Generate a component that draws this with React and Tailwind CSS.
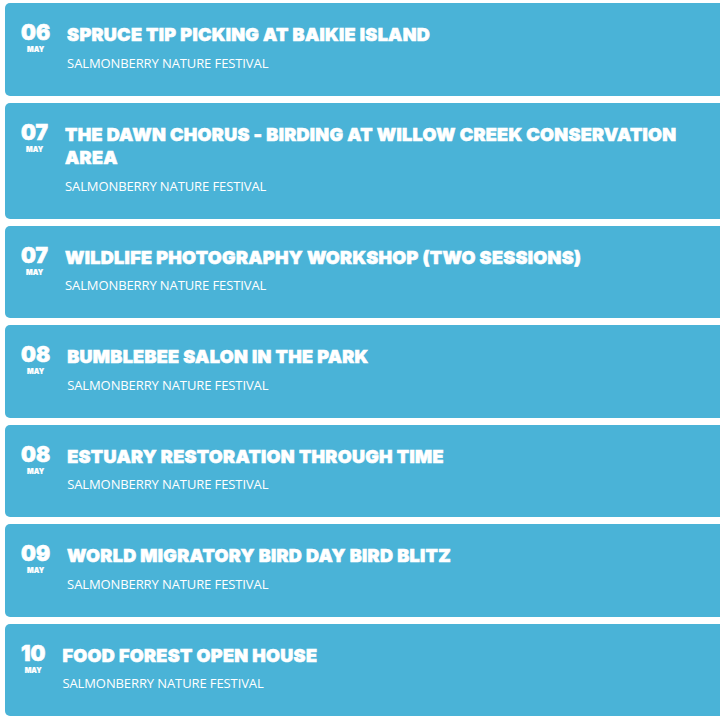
import React from "react";

const events = [
  { day: "06", title: "Spruce Tip Picking at Baikie Island" },
  { day: "07", title: "The Dawn Chorus - Birding at Willow Creek Conservation Area" },
  { day: "07", title: "Wildlife Photography Workshop (Two Sessions)" },
  { day: "08", title: "Bumblebee Salon in the Park" },
  { day: "08", title: "Estuary Restoration Through Time" },
  { day: "09", title: "World Migratory Bird Day Bird Blitz" },
  { day: "10", title: "Food Forest Open House" },
];

export default function App() {
  return (
    <div className="min-h-[720px] bg-white pt-[3px] pl-[5px] font-['Inter',sans-serif]">
      <ul className="flex flex-col gap-[7px]">
        {events.map((ev, i) => (
          <li
            key={ev.day + "-" + i}
            className="flex gap-[17px] rounded-l-[5px] bg-[#4ab3d7] pl-[16px] pr-[22px] pt-[20px] pb-[24px] text-white"
          >
            <div className="-mt-[2px] flex shrink-0 flex-col items-center">
              <span className="text-[21px] font-black leading-[24px] [-webkit-text-stroke:0.6px_white]">{ev.day}</span>
              <span className="mt-[1px] text-[7px] font-black leading-[8px] uppercase [-webkit-text-stroke:0.2px_white]">May</span>
            </div>
            <div className="min-w-0 flex-1">
              <h3 className="text-[18px] font-black uppercase leading-[23.5px] tracking-[0.3px] [-webkit-text-stroke:0.6px_white]">
                {ev.title}
              </h3>
              <p className="mt-[7px] font-['Open_Sans',sans-serif] text-[13px] uppercase leading-[18px] tracking-[-0.1px]">
                Salmonberry Nature Festival
              </p>
            </div>
          </li>
        ))}
      </ul>
    </div>
  );
}
